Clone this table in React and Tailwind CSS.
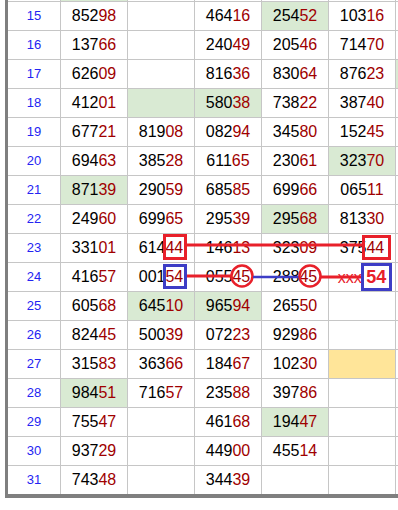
import React from 'react';

const rows = [
  [15, ['85298', '', '46416', '25452', '10316'], { 3: 'g' }],
  [16, ['13766', '', '24049', '20546', '71470'], {}],
  [17, ['62609', '', '81636', '83064', '87623'], { 5: 'g' }],
  [18, ['41201', '', '58038', '73822', '38740'], { 1: 'g', 2: 'g' }],
  [19, ['67721', '81908', '08294', '34580', '15245'], {}],
  [20, ['69463', '38528', '61165', '23061', '32370'], { 4: 'g' }],
  [21, ['87139', '29059', '68585', '69966', '06511'], { 0: 'g' }],
  [22, ['24960', '69965', '29539', '29568', '81330'], { 3: 'g' }],
  [23, ['33101', '61444', '14613', '32309', '37544'], {}],
  [24, ['41657', '00154', '05545', '28845', 'mark'], {}],
  [25, ['60568', '64510', '96594', '26550', ''], { 1: 'g', 2: 'g' }],
  [26, ['82445', '50039', '07223', '92986', ''], {}],
  [27, ['31583', '36366', '18467', '10230', ''], { 4: 'y' }],
  [28, ['98451', '71657', '23588', '39786', ''], { 0: 'g' }],
  [29, ['75547', '', '46168', '19447', ''], { 3: 'g' }],
  [30, ['93729', '', '44900', '45514', ''], {}],
  [31, ['74348', '', '34439', '', ''], {}],
];

const bg = { g: 'bg-[#d9ead3]', y: 'bg-[#ffe599]' };

function Num({ v }) {
  if (v === 'mark') {
    return (
      <span className="text-[#e8202a]">
        xxx <b className="text-[18px]">54</b>
      </span>
    );
  }
  if (!v) return null;
  return (
    <span>
      <span className="text-black">{v.slice(0, 3)}</span>
      <span className="text-[#a00000]">{v.slice(3)}</span>
    </span>
  );
}

function Row({ n, cells, colors, last }) {
  const line = last ? '' : 'border-b';
  return (
    <div className="grid grid-cols-[53px_67px_67px_67px_67px_67px_1fr] h-[29px] last:h-[28px]">
      <div className={`${line} border-r border-[#c6c6c6] flex items-center justify-center text-[13px] text-[#2424f2]`}>
        {n}
      </div>
      {cells.map((v, i) => (
        <div
          key={i}
          className={`${line} border-r border-[#c6c6c6] flex items-center justify-center text-[16px] ${bg[colors[i]] || ''}`}
        >
          <Num v={v} />
        </div>
      ))}
      <div className={`${line} border-[#c6c6c6] ${bg[colors[5]] || ''}`} />
    </div>
  );
}

export default function App() {
  const red = '#e8202a';
  const blue = '#3d3dc6';
  return (
    <div className="relative w-[398px] h-[510px] bg-white pl-[5px] overflow-hidden" style={{ fontFamily: '"Liberation Sans", Arial, sans-serif' }}>
      <div className="border-l-[3px] border-b-[4px] border-[#7f7f7f]">
        {/* sliver of row 14 */}
        <div className="grid grid-cols-[53px_67px_67px_67px_67px_67px_1fr] h-[2px]">
          <div className="border-b border-r border-[#c6c6c6]" />
          <div className="border-b border-r border-[#c6c6c6] bg-[#d9ead3]" />
          <div className="border-b border-r border-[#c6c6c6]" />
          <div className="border-b border-r border-[#c6c6c6]" />
          <div className="border-b border-r border-[#c6c6c6]" />
          <div className="border-b border-r border-[#c6c6c6]" />
          <div className="border-b border-[#c6c6c6]" />
        </div>
        {rows.map(([n, cells, colors], i) => (
          <Row key={n} n={n} cells={cells} colors={colors} last={i === rows.length - 1} />
        ))}
      </div>

      {/* hand-drawn marks */}
      <svg className="absolute inset-0 pointer-events-none" width="398" height="510" fill="none">
        <rect x="164.5" y="235.5" width="21" height="23" stroke={red} strokeWidth="3" />
        <line x1="187" y1="245" x2="362" y2="245" stroke={red} strokeWidth="3" />
        <rect x="363.5" y="236.5" width="26" height="22" stroke={red} strokeWidth="3" />

        <rect x="164.5" y="265.5" width="21" height="22" stroke={blue} strokeWidth="3" />
        <line x1="187" y1="276" x2="231" y2="276" stroke={red} strokeWidth="3" />
        <circle cx="242" cy="276" r="10.5" stroke={red} strokeWidth="2.5" />
        <line x1="253" y1="277" x2="299" y2="277" stroke={blue} strokeWidth="2.5" />
        <circle cx="310" cy="276" r="10.5" stroke={red} strokeWidth="2.5" />
        <line x1="321" y1="277" x2="362" y2="277" stroke={red} strokeWidth="3" />
        <rect x="362.5" y="264.5" width="28" height="25" stroke={blue} strokeWidth="3" />
      </svg>
    </div>
  );
}
